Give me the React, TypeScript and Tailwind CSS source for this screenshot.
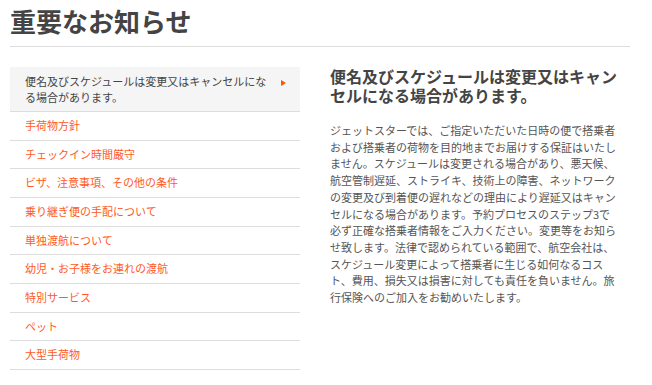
import React from 'react';

const NAV_ITEMS = [
  '手荷物方針',
  'チェックイン時間厳守',
  'ビザ、注意事項、その他の条件',
  '乗り継ぎ便の手配について',
  '単独渡航について',
  '幼児・お子様をお連れの渡航',
  '特別サービス',
  'ペット',
  '大型手荷物',
];

const BODY_LINES = [
  'ジェットスターでは、ご指定いただいた日時の便で搭乗者',
  'および搭乗者の荷物を目的地までお届けする保証はいたし',
  'ません。スケジュールは変更される場合があり、悪天候、',
  '航空管制遅延、ストライキ、技術上の障害、ネットワーク',
  'の変更及び到着便の遅れなどの理由により遅延又はキャン',
  'セルになる場合があります。予約プロセスのステップ3で',
  '必ず正確な搭乗者情報をご入力ください。変更等をお知ら',
  'せ致します。法律で認められている範囲で、航空会社は、',
  'スケジュール変更によって搭乗者に生じる如何なるコス',
  'ト、費用、損失又は損害に対しても責任を負いません。旅',
  '行保険へのご加入をお勧めいたします。',
];

export default function App() {
  return (
    <div
      className="w-[652px] h-[385px] overflow-hidden bg-white px-[10px]"
      style={{ fontFamily: '"Noto Sans CJK JP", "Noto Sans", sans-serif' }}
    >
      <div className="w-[620px] border-b border-[#dddddd] pt-[5px] pb-[9px]">
        <h1 className="text-[26px] leading-[32px] font-bold text-[#444444]">重要なお知らせ</h1>
      </div>

      <div className="mt-[20px] flex gap-[30px]">
        <ul className="w-[290px] shrink-0">
          <li className="relative bg-[#f5f5f5] border-b border-[#dddddd] pl-[15px] pr-[30px] py-[6px] text-[11px] leading-[16px] text-[#444444]">
            便名及びスケジュールは変更又はキャンセルになる場合があります。
            <span className="absolute right-[14px] top-[13px] w-0 h-0 border-y-[3px] border-y-transparent border-l-[5px] border-l-[#ff5500]" />
          </li>
          {NAV_ITEMS.map(item => (
            <li
              key={item}
              className="border-b border-[#dddddd] pl-[15px] py-[6px] text-[11px] leading-[15.67px] text-[#ff5a26]"
            >
              {item}
            </li>
          ))}
        </ul>

        <div className="w-[292px]">
          <h2 className="text-[16px] leading-[19px] font-bold text-[#444444]">
            便名及びスケジュールは変更又はキャンセルになる場合があります。
          </h2>
          <p className="mt-[17px] text-[11px] leading-[16.7px] text-[#555555] whitespace-nowrap">
            {BODY_LINES.map((line, i) => (
              <React.Fragment key={i}>
                {line}
                {i < BODY_LINES.length - 1 && <br />}
              </React.Fragment>
            ))}
          </p>
        </div>
      </div>
    </div>
  );
}
